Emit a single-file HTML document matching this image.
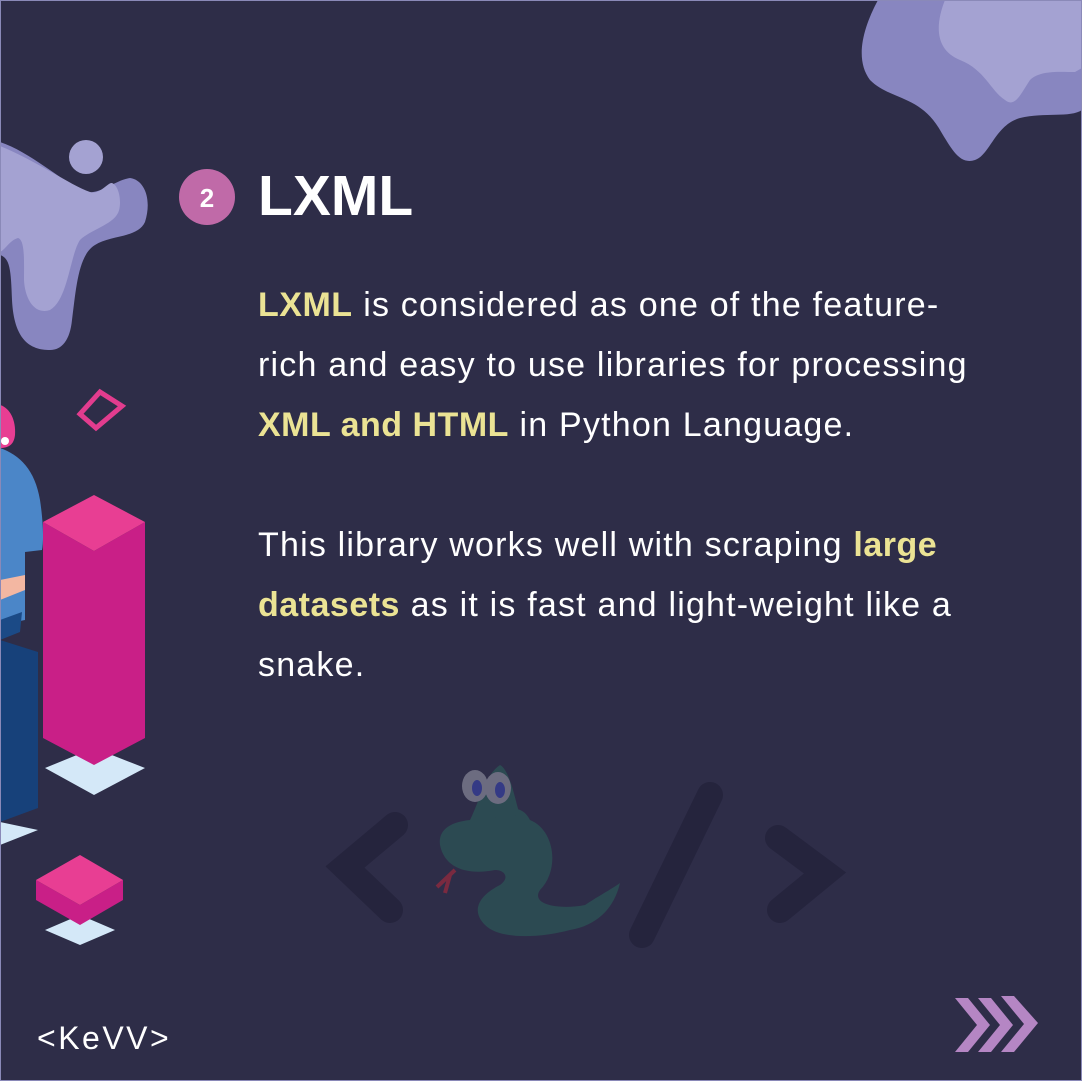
<!DOCTYPE html>
<html><head><meta charset="utf-8"><style>
html,body{margin:0;padding:0;background:#2e2d48;}
body{width:1082px;height:1081px;position:relative;overflow:hidden;font-family:"Liberation Sans",sans-serif;}
.line{position:absolute;left:258px;white-space:nowrap;color:#fff;font-size:34px;letter-spacing:1.2px;line-height:40px;}
.y{color:#ebe394;font-weight:bold;letter-spacing:0.5px;}
</style></head><body>
<svg width="1082" height="1081" style="position:absolute;left:0;top:0">
<path d="M878,0 C862,30 855,60 870,80 C890,100 920,95 940,130 C952,150 960,165 975,160 C990,155 995,125 1020,118 C1045,112 1070,118 1082,110 L1082,0 Z" fill="#8886c0"/>
<path d="M945,0 C935,25 935,50 960,60 C985,70 990,90 1005,100 C1015,108 1020,95 1030,80 C1040,70 1060,72 1075,72 L1082,68 L1082,0 Z" fill="#a4a2d2"/>
<path d="M0,142 C30,152 60,180 85,192 C100,195 115,180 130,178 C145,180 152,200 145,222 C138,238 110,235 95,245 C78,255 76,290 72,320 C70,340 62,350 50,350 C30,350 14,340 12,300 C11,270 10,258 0,255 Z" fill="#8886c0"/>
<path d="M0,146 C35,160 70,185 90,192 C100,195 108,182 112,183 C120,186 122,205 118,213 C112,225 90,230 80,240 C70,255 68,300 50,310 C35,315 25,300 24,280 C24,260 25,240 18,238 C10,240 5,250 0,252 Z" fill="#a4a2d2"/>
<circle cx="86" cy="157" r="17" fill="#a4a2d2"/>
<path d="M100,392 L122,406 L96,428 L80,414 Z" fill="none" stroke="#e23c8e" stroke-width="5"/>
<path d="M0,405 C10,408 16,420 15,435 C14,445 8,448 0,448 Z" fill="#e83e93"/>
<circle cx="5" cy="441" r="4" fill="#fff"/>
<path d="M0,448 C20,455 35,470 40,500 C43,520 44,540 42,550 L25,552 L25,620 L0,625 Z" fill="#4b86c8"/>
<path d="M0,580 L25,575 L25,590 L0,600 Z" fill="#f3b7a2"/>
<path d="M0,620 L22,612 L20,632 L0,640 Z" fill="#1b4a86"/>
<path d="M0,640 L38,652 L38,808 L0,822 Z" fill="#17417a"/>
<path d="M0,822 L38,830 L0,845 Z" fill="#d4e8f8"/>
<path d="M45,768 L94,748 L145,768 L94,795 Z" fill="#d4e8f8"/>
<path d="M43,522 L94,551 L145,522 L145,738 L94,765 L43,738 Z" fill="#c91f87"/>
<path d="M43,522 L94,495 L145,522 L94,551 Z" fill="#e83e93"/>
<path d="M45,930 L80,915 L115,930 L80,945 Z" fill="#d4e8f8"/>
<path d="M36,880 L80,905 L123,880 L123,900 L80,925 L36,900 Z" fill="#c91f87"/>
<path d="M36,880 L80,855 L123,880 L80,905 Z" fill="#e83e93"/>
<g stroke="#25243d" stroke-width="26" stroke-linecap="round" fill="none">
<path d="M395,825 L345,867 L390,910"/>
<path d="M710,795 L642,935"/>
<path d="M778,838 L825,873 L780,910"/>
</g>
<path d="M470,820 C500,810 520,800 530,820 C555,830 560,870 540,890 C530,905 560,910 585,905 C600,895 610,890 620,883 C615,905 600,925 570,930 C540,938 500,940 485,925 C470,910 480,895 500,885 C510,878 505,870 495,870 C470,875 445,870 440,845 C438,830 450,822 470,820 Z" fill="#2c4a52"/>
<path d="M470,820 C480,800 485,775 500,765 C510,770 515,800 520,815 Z" fill="#2c4a52"/>
<ellipse cx="475" cy="786" rx="13" ry="16" fill="#6c6c80"/>
<ellipse cx="498" cy="788" rx="13" ry="16" fill="#6c6c80"/>
<ellipse cx="477" cy="788" rx="5" ry="8" fill="#343a85"/>
<ellipse cx="500" cy="790" rx="5" ry="8" fill="#343a85"/>
<path d="M455,870 L437,887 M450,875 L445,893" stroke="#7a2a40" stroke-width="4"/>
<g fill="#b586c4">
<path d="M955,998 L968,998 L990,1025 L968,1052 L955,1052 L977,1025 Z"/>
<path d="M978,998 L991,998 L1013,1025 L991,1052 L978,1052 L1000,1025 Z"/>
<path d="M1001,996 L1014,996 L1038,1023 L1014,1052 L1001,1052 L1024,1024 Z"/>
</g>
<circle cx="207" cy="197" r="28" fill="#c06aa8"/>
<text x="207" y="207" text-anchor="middle" font-family="Liberation Sans" font-weight="bold" font-size="26" fill="#fff">2</text>
<rect x="0.5" y="0.5" width="1081" height="1080" fill="none" stroke="#8a89b8" stroke-width="1"/>
</svg>
<div style="position:absolute;left:258px;top:160px;color:#fff;font-weight:bold;font-size:57px;line-height:72px;">LXML</div>
<div class="line" style="top:285px"><span class="y">LXML</span> is considered as one of the feature-</div>
<div class="line" style="top:345px">rich and easy to use libraries for processing</div>
<div class="line" style="top:405px"><span class="y">XML and HTML</span> in Python Language.</div>
<div class="line" style="top:525px">This library works well with scraping <span class="y">large</span></div>
<div class="line" style="top:585px"><span class="y">datasets</span> as it is fast and light-weight like a</div>
<div class="line" style="top:645px">snake.</div>
<div style="position:absolute;left:37px;top:1018px;color:#fff;font-size:32px;letter-spacing:2.5px;line-height:40px;">&lt;KeVV&gt;</div>
</body></html>
